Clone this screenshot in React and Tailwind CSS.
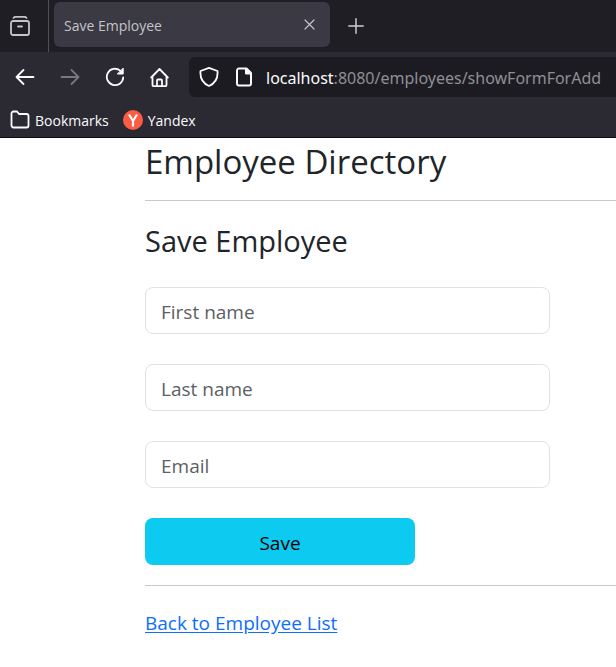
const fields = [
  { id: "firstName", label: "First name", type: "text" },
  { id: "lastName", label: "Last name", type: "text" },
  { id: "email", label: "Email", type: "email" },
];

function Icon({ className, children, width = 20, stroke = 1.8 }) {
  return (
    <svg
      className={className}
      width={width}
      height={width}
      viewBox="0 0 20 20"
      fill="none"
      stroke="currentColor"
      strokeWidth={stroke}
      strokeLinecap="round"
      strokeLinejoin="round"
      aria-hidden="true"
    >
      {children}
    </svg>
  );
}

function TabStrip() {
  return (
    <div className="flex h-[52px] bg-[#1f1e25]">
      <button type="button" aria-label="Recent browsing" className="flex w-12 items-center justify-center pr-2 text-[#c4c4c9]">
        <Icon>
          <path d="M3.500 1.900C4 1.100 4.700.9 5.500.9h9c.8 0 1.500.2 2 1" />
          <rect x="1" y="5" width="18" height="14" rx="2" />
          <path d="M8 10.500h4" />
        </Icon>
      </button>
      <div className="w-px bg-[#505059]" />
      <div className="ml-[5px] mt-0.5 flex h-[45px] w-[276px] items-center justify-between rounded-md bg-[#3a3944] pl-2.5 pr-[13px] text-[#c4c4c8]">
        <span className="pt-0.5 text-[14px]">Save Employee</span>
        <button type="button" aria-label="Close tab">
          <Icon width={15} stroke={1.6}>
            <path d="M4 4l12 12M16 4l-12 12" />
          </Icon>
        </button>
      </div>
      <button type="button" aria-label="New tab" className="ml-[17px] text-[#d0d0d4]">
        <Icon width={18} stroke={1.6}>
          <path d="M10 2v16M2 10h16" />
        </Icon>
      </button>
    </div>
  );
}

function Toolbar() {
  return (
    <div className="flex h-[50px] items-center">
      <div className="flex flex-none items-center gap-[25px] pl-[15px] text-[#fbfbfe]">
        <button type="button" aria-label="Back">
          <Icon>
            <path d="M18.500 10H2M8.500 3L1.500 10l7 7" />
          </Icon>
        </button>
        <button type="button" aria-label="Forward" className="text-[#78777e]">
          <Icon>
            <path d="M1.500 10H18M11.500 3l7 7-7 7" />
          </Icon>
        </button>
        <button type="button" aria-label="Reload">
          <Icon>
            <path d="M18.200 10.500A8.200 8.200 0 1 1 15.200 3.600" />
            <path d="M18.200 1.500v5.500h-5.500z" fill="currentColor" strokeWidth="1" />
          </Icon>
        </button>
        <button type="button" aria-label="Home">
          <Icon>
            <path d="M1.200 10.500L9.500 2l8.300 8.500M2.500 9.500V18a1.200 1.200 0 0 0 1.200 1.200h11.600a1.200 1.200 0 0 0 1.200-1.200V9.500M7 19v-5.500a1 1 0 0 1 1-1h3a1 1 0 0 1 1 1V19" />
          </Icon>
        </button>
      </div>
      <div className="ml-[19px] flex h-10 min-w-0 flex-1 items-center rounded-l-md bg-[#1c1b22] pl-2.5 text-[#fbfbfe]">
        <Icon className="flex-none">
          <path d="M10 .9L18.500 4c.5 6-1.500 12-8.500 15C3 16 1 10 1.500 4z" />
        </Icon>
        <Icon className="ml-[15px] flex-none" stroke={2}>
          <path d="M12.500 1.500H5a2 2 0 0 0-2 2v13a2 2 0 0 0 2 2h10a2 2 0 0 0 2-2V6z" />
          <path d="M11.500 1.500V7H17z" fill="currentColor" strokeWidth="1" />
        </Icon>
        <span className="ml-3 whitespace-nowrap pt-0.5 font-['Noto_Sans',sans-serif] text-[16px] text-[#8f8f94]">
          <span className="text-[#fbfbfe]">localhost</span>:8080/employees/showFormForAdd
        </span>
      </div>
    </div>
  );
}

function BookmarksBar() {
  return (
    <div className="flex h-[35px] items-center gap-3.5 pl-2.5 text-[14px] text-[#fbfbfe]">
      <button type="button" className="flex items-center gap-[5px]">
        <Icon>
          <path d="M1.500 15.500v-12a2 2 0 0 1 2-2H7l2 2.500h7.500a2 2 0 0 1 2 2v9.500a2 2 0 0 1-2 2h-13a2 2 0 0 1-2-2z" />
        </Icon>
        <span className="pt-0.5">Bookmarks</span>
      </button>
      <a href="#yandex" className="flex items-center gap-[5px]">
        <svg width="20" height="20" viewBox="0 0 20 20" aria-hidden="true">
          <circle cx="10" cy="10" r="10" fill="#fc5b44" />
          <path d="M6 4.500l4 6.500 4-6.500M10 11v5.500" fill="none" stroke="#fff" strokeWidth="2.200" />
        </svg>
        <span className="pt-0.5">Yandex</span>
      </a>
    </div>
  );
}

export default function App() {
  return (
    <div className="min-h-screen bg-white font-['Open_Sans','Noto_Sans',sans-serif]">
      <header className="border-b border-[#0c0c0d] bg-[#2b2a33]">
        <TabStrip />
        <Toolbar />
        <BookmarksBar />
      </header>
      <main className="pl-[145px] text-[19px] text-[#212529]">
        <h1 className="pb-4 pt-0.5 text-[33px] leading-[44px]">Employee Directory</h1>
        <hr className="border-[#c8c9ca]" />
        <h2 className="pb-[26px] pt-5 text-[29px] leading-10">Save Employee</h2>
        <form className="flex flex-col gap-[30px]" onSubmit={(event) => event.preventDefault()}>
          {fields.map((field) => (
            <input
              key={field.id}
              id={field.id}
              name={field.id}
              type={field.type}
              aria-label={field.label}
              placeholder={field.label}
              className="h-[47px] w-full max-w-[405px] rounded-lg border border-[#dee2e6] px-[15px] pt-0.5 placeholder:text-[#5c6065]"
            />
          ))}
          <button type="submit" className="h-[47px] w-full max-w-[270px] rounded-lg bg-[#0dcaf0] pt-1 text-black">
            Save
          </button>
        </form>
        <hr className="my-5 border-[#c8c9ca]" />
        <a href="#employees" className="leading-[34px] text-[#0d6efd] underline underline-offset-2">
          Back to Employee List
        </a>
      </main>
    </div>
  );
}
